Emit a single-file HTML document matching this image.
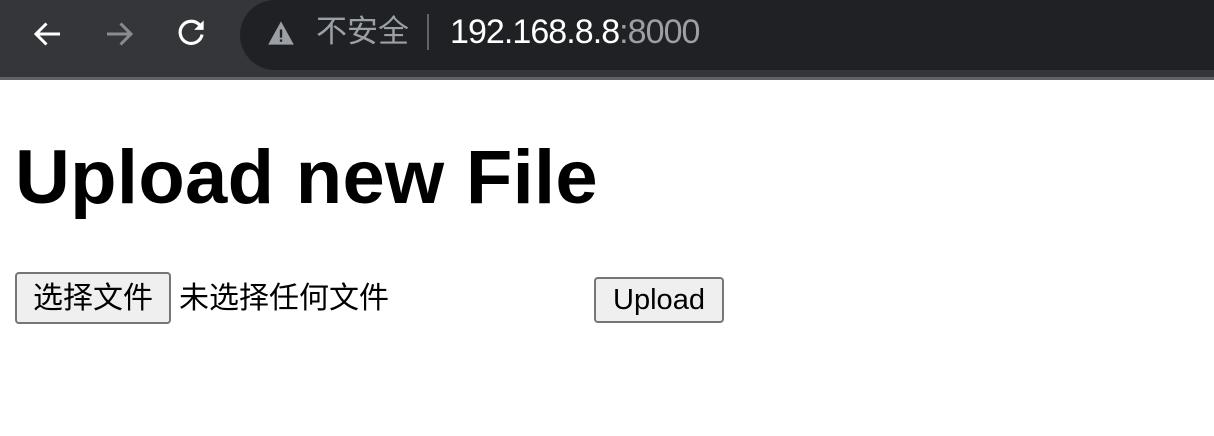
<!DOCTYPE html>
<html><head><meta charset="utf-8"><style>
body{margin:0;width:1214px;height:436px;background:#fff;overflow:hidden;font-family:"Liberation Sans","Noto Sans CJK SC",sans-serif;position:relative}
.bar{position:absolute;left:0;top:0;width:1214px;height:77px;background:#35363a}
.line{position:absolute;left:0;top:77px;width:1214px;height:3px;background:#5f6368}
.omni{position:absolute;left:240px;top:0;width:1000px;height:70px;background:#202124;border-radius:0 0 0 35px;border-top-left-radius:35px}
.t{position:absolute;white-space:nowrap;line-height:1}
h1{position:absolute;left:15px;top:140px;margin:0;font-size:76px;line-height:1;font-weight:bold;letter-spacing:0.3px}
.btn{position:absolute;background:#efefef;border:2px solid #767676;border-radius:4px;box-sizing:border-box;display:flex;align-items:center;justify-content:center;color:#000;line-height:1}
</style></head><body>
<div class="bar"></div><div class="line"></div><div class="omni"></div>
<svg class="t" style="left:30px;top:16px" width="36" height="36" viewBox="0 0 24 24"><path d="M20 12H5M11 5l-7 7 7 7" stroke="#fff" stroke-width="2" fill="none"/></svg>
<svg class="t" style="left:101px;top:16px" width="36" height="36" viewBox="0 0 24 24"><path d="M4 12h15M13 5l7 7-7 7" stroke="#8a8b8e" stroke-width="2" fill="none"/></svg>
<svg class="t" style="left:172px;top:14px" width="38" height="38" viewBox="0 0 24 24"><path d="M17.6 7.2A7 7 0 1 0 19 13" stroke="#fff" stroke-width="2" fill="none"/><path d="M20 4v6h-6z" fill="#fff"/></svg>
<svg class="t" style="left:267px;top:20px" width="28" height="26" viewBox="0 0 24 22"><path d="M12 1L23 21H1z" fill="#9aa0a6"/><rect x="11" y="8" width="2" height="7" fill="#202124"/><rect x="11" y="16.5" width="2" height="2" fill="#202124"/></svg>
<div class="t" style="left:316px;top:16px;font-size:31px;color:#9aa0a6">不安全</div>
<div class="t" style="left:427px;top:14px;width:2px;height:36px;background:#5f6368"></div>
<div class="t" style="left:450px;top:15px;font-size:34px;color:#fff;letter-spacing:-0.95px">192.168.8.8<span style="color:#9aa0a6">:8000</span></div>
<h1>Upload new File</h1>
<div class="btn" style="left:15px;top:272px;width:156px;height:52px;font-size:30px;padding-top:2px">选择文件</div>
<div class="t" style="left:179px;top:284px;font-size:30px">未选择任何文件</div>
<div class="btn" style="left:594px;top:277px;width:130px;height:46px;font-size:29px">Upload</div>
</body></html>
